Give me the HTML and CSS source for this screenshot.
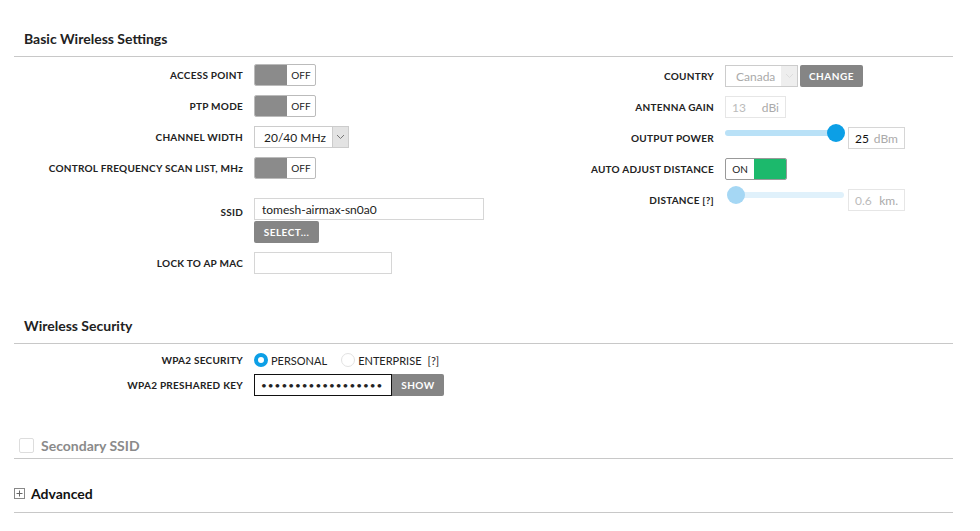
FILE: index.html
```html
<!DOCTYPE html>
<html>
<head>
<meta charset="utf-8">
<link rel="stylesheet" href="styles.css">
</head>
<body>
<div class="page">
  <section class="sec">
    <h2 class="sec-title">Basic Wireless Settings</h2>
    <div class="cols">
      <div class="form left">
        <div class="lbl">ACCESS POINT</div>
        <div class="ctl"><div class="tgl"><span class="tgl-knob"></span><span class="tgl-txt">OFF</span></div></div>
        <div class="lbl">PTP MODE</div>
        <div class="ctl"><div class="tgl"><span class="tgl-knob"></span><span class="tgl-txt">OFF</span></div></div>
        <div class="lbl">CHANNEL WIDTH</div>
        <div class="ctl"><div class="sel"><span class="sel-txt">20/40 MHz</span><span class="sel-arr"><svg width="9" height="6" viewBox="0 0 9 6"><path d="M1 1l3.5 3.5L8 1" fill="none" stroke="#777" stroke-width="1"/></svg></span></div></div>
        <div class="lbl">CONTROL FREQUENCY SCAN LIST, MHz</div>
        <div class="ctl"><div class="tgl"><span class="tgl-knob"></span><span class="tgl-txt">OFF</span></div></div>
        <div class="lbl lbl-ssid">SSID</div>
        <div class="ctl ctl-ssid"><div class="inp inp-ssid">tomesh-airmax-sn0a0</div><div class="btn btn-select">SELECT...</div></div>
        <div class="lbl">LOCK TO AP MAC</div>
        <div class="ctl"><div class="inp inp-mac"></div></div>
      </div>
      <div class="form right">
        <div class="lbl">COUNTRY</div>
        <div class="ctl"><div class="sel sel-dis"><span class="sel-txt">Canada</span><span class="sel-arr"><svg width="9" height="6" viewBox="0 0 9 6"><path d="M1 1l3.5 3.5L8 1" fill="none" stroke="#ddd" stroke-width="1"/></svg></span></div><div class="btn btn-change">CHANGE</div></div>
        <div class="lbl">ANTENNA GAIN</div>
        <div class="ctl"><div class="inp inp-unit inp-gain dis"><span>13</span><span class="unit">dBi</span></div></div>
        <div class="lbl">OUTPUT POWER</div>
        <div class="ctl"><div class="slider"><div class="track"></div><div class="thumb"></div></div><div class="inp inp-unit inp-pow"><span class="val">25</span><span class="unit">dBm</span></div></div>
        <div class="lbl">AUTO ADJUST DISTANCE</div>
        <div class="ctl"><div class="tgl tgl-on"><span class="tgl-txt">ON</span><span class="tgl-green"></span></div></div>
        <div class="lbl">DISTANCE [?]</div>
        <div class="ctl"><div class="slider slider-dis"><div class="track"></div><div class="thumb"></div></div><div class="inp inp-unit inp-dist dis"><span>0.6</span><span class="unit">km.</span></div></div>
      </div>
    </div>
  </section>

  <section class="sec sec-sec">
    <h2 class="sec-title">Wireless Security</h2>
    <div class="form sform">
      <div class="lbl">WPA2 SECURITY</div>
      <div class="ctl radios">
        <span class="radio radio-on"></span><span class="rtxt">PERSONAL</span>
        <span class="radio"></span><span class="rtxt">ENTERPRISE</span><span class="help">[?]</span>
      </div>
      <div class="lbl">WPA2 PRESHARED KEY</div>
      <div class="ctl"><div class="inp inp-key">••••••••••••••••••</div><div class="btn btn-show">SHOW</div></div>
    </div>
  </section>

  <div class="bar bar-ssid"><span class="chk"></span><span class="bar-txt gray">Secondary SSID</span></div>
  <div class="bar bar-adv"><span class="plus"><svg width="11" height="11" viewBox="0 0 11 11"><rect x="0.5" y="0.5" width="10" height="10" fill="#fff" stroke="#888"/><path d="M5.5 2.5v6M2.5 5.5h6" stroke="#666" stroke-width="1"/></svg></span><span class="bar-txt">Advanced</span></div>
</div>
</body>
</html>
```

FILE: styles.css
```css
* { box-sizing: border-box; }
html, body { margin: 0; padding: 0; background: #fff; }
body { font-family: Lato, "Open Sans", sans-serif; color: #222; }
.page { width: 939px; margin-left: 14px; padding-top: 27px; }

.sec-title {
  margin: 0;
  padding: 3px 0 0 10px;
  height: 30px;
  font-size: 14px;
  font-weight: 700;
  color: #222;
  border-bottom: 1px solid #c8c8c8;
}

.cols { display: flex; align-items: flex-start; padding-top: 7px; }
.form { display: grid; align-items: center; align-content: start; column-gap: 11px; row-gap: 9px; }
.left { grid-template-columns: 229px auto; width: 470px; }
.right { grid-template-columns: 229px auto; row-gap: 9px; margin-top: 1px; margin-left: 1px; }
.lbl { font-size: 10px; font-weight: 700; text-align: right; color: #222; letter-spacing: 0.25px; }
.ctl { display: flex; align-items: center; }

.tgl { display: flex; width: 62px; height: 22px; border: 1px solid #bbb; border-radius: 2px; overflow: hidden; background: #fff; }
.tgl-knob { width: 32px; background: #8b8b8b; }
.tgl-txt { flex: 1; font-size: 10px; display: flex; align-items: center; justify-content: center; color: #222; }
.tgl-green { width: 32px; background: #1cb96c; }
.tgl-on { border-color: #999; }

.sel { display: flex; height: 22px; border: 1px solid #ccc; background: #fff; }
.sel-txt { font-size: 12px; padding: 0 6px 0 9px; display: flex; align-items: center; }
.sel-arr { width: 16px; background: #e3e3e3; border-left: 1px solid #ccc; display: flex; align-items: center; justify-content: center; }
.sel-dis { width: 73px; }
.sel-dis .sel-txt { color: #aaa; flex: 1; padding-left: 10px; }
.sel-dis .sel-arr { background: #eee; border-left: 1px solid #eee; }

.inp { height: 22px; border: 1px solid #d6d6d6; font-size: 12px; display: flex; align-items: center; padding: 0 7px; background: #fff; }
.ctl-ssid { flex-direction: column; align-items: flex-start; }
.lbl-ssid { align-self: start; padding-top: 8px; }
.left .ctl-ssid { margin-top: 10px; }
.left .lbl-ssid { margin-top: 10px; }
.inp-ssid { width: 230px; }
.inp-mac { width: 138px; }

.btn { background: #858585; color: #fff; font-size: 10px; font-weight: 700; letter-spacing: 0.5px; display: flex; align-items: center; justify-content: center; border-radius: 2px; }
.btn-select { width: 65px; height: 22px; margin-top: 1px; }
.btn-change { width: 63px; height: 22px; margin-left: 2px; }
.btn-show { width: 52px; height: 22px; border-radius: 0 2px 2px 0; }

.inp-unit { justify-content: space-between; padding: 0 6px; color: #333; }
.inp-gain { width: 61px; }
.dis { color: #bbb; border-color: #e6e6e6; }
.unit { color: #aaa; }
.inp-pow { width: 57px; margin-left: 12px; }
.inp-dist { width: 57px; margin-left: 4px; }
.val { color: #111; }

.slider { position: relative; width: 111px; height: 20px; align-self: flex-start; margin-top: -5px; }
.track { position: absolute; left: 0; right: 0; top: 8px; height: 6px; border-radius: 3px; background: #b9e1f7; }
.thumb { position: absolute; right: -9px; top: 2px; width: 18px; height: 18px; border-radius: 50%; background: #0c9fe6; }
.slider-dis { width: 119px; }
.slider-dis .track { background: #e0f1fb; left: 3px; }
.slider-dis .thumb { left: 2px; right: auto; background: #a5d7f4; }

.sec-sec { margin-top: 40px; }
.sform { grid-template-columns: 229px auto; padding-top: 9px; row-gap: 7px; }
.radios { font-size: 11px; color: #222; height: 14px; }
.radio { width: 14px; height: 14px; border-radius: 50%; border: 1px solid #e2e2e2; background: #fff; display: inline-block; margin-right: 3px; }
.radio-on { border: 4px solid #0c9fe6; background: #fff; }
.rtxt { margin-right: 14px; }
.help { margin-left: -8px; }
.inp-key { width: 138px; border-color: #111; font-size: 10px; letter-spacing: 1px; padding: 0 6px; }

.bar { display: flex; align-items: center; border-bottom: 1px solid #c8c8c8; }
.bar-ssid { margin-top: 36px; height: 27px; padding-left: 5px; }
.chk { width: 15px; height: 15px; border: 1px solid #ddd; border-radius: 2px; margin-right: 7px; }
.bar-txt { font-size: 14px; font-weight: 700; color: #111; }
.gray { color: #8a8a8a; }
.bar-adv { height: 54px; padding-top: 16px; }
.plus { display: flex; margin-right: 6px; }
```
